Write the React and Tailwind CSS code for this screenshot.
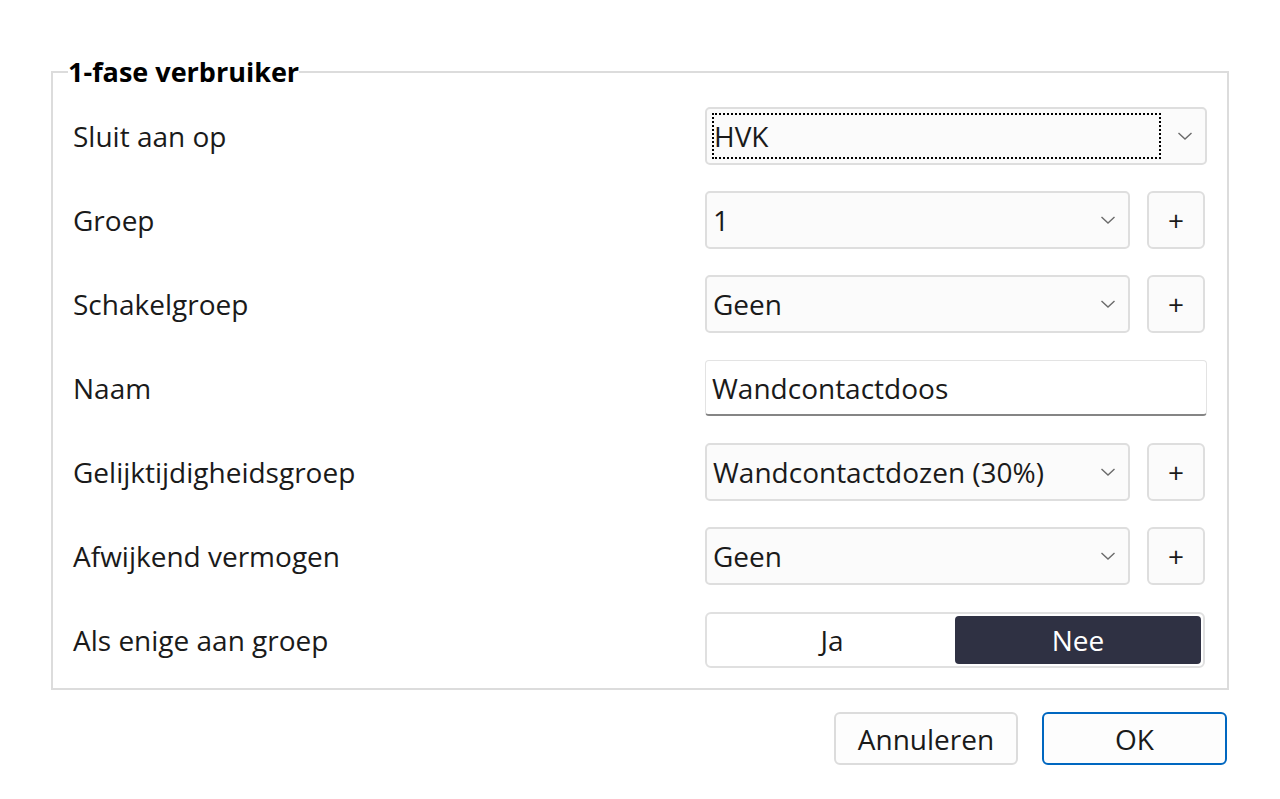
import React, { useState } from "react";

// Chevron used in the combo boxes
function Chevron() {
  return (
    <svg width="16" height="10" viewBox="0 0 16 10" className="shrink-0">
      <path d="M1.5 2 L8 8 L14.5 2" fill="none" stroke="#6b6b6b" strokeWidth="1.4" />
    </svg>
  );
}

function Combo({ value, focused, wide }) {
  return (
    <div
      className={`h-[58px] ${wide ? "w-[502px]" : "w-[425px]"} flex items-center rounded-[5px] border-2 border-[#dedede] bg-[#fbfbfb] pl-[5px] pr-[12px]`}
    >
      <div
        className={`flex-1 h-[46px] flex items-center ${focused ? "border-2 border-dotted border-black" : "pl-[1px]"}`}
      >
        <span className="text-[28px] leading-none text-[#1a1a1a]">{value}</span>
      </div>
      <div className={`${focused ? "ml-[16px]" : ""} flex items-center`}>
        <Chevron />
      </div>
    </div>
  );
}

function PlusButton() {
  return (
    <button className="h-[58px] w-[58px] ml-[17px] flex items-center justify-center rounded-[6px] border-2 border-[#dedede] bg-[#fbfbfb] text-[28px] text-[#1a1a1a]">
      +
    </button>
  );
}

const rows = [
  { label: "Sluit aan op", kind: "combo-wide", value: "HVK" },
  { label: "Groep", kind: "combo", value: "1" },
  { label: "Schakelgroep", kind: "combo", value: "Geen" },
  { label: "Naam", kind: "text", value: "Wandcontactdoos" },
  { label: "Gelijktijdigheidsgroep", kind: "combo", value: "Wandcontactdozen (30%)" },
  { label: "Afwijkend vermogen", kind: "combo", value: "Geen" },
  { label: "Als enige aan groep", kind: "toggle" },
];

export default function App() {
  const [alone, setAlone] = useState(false);

  return (
    <div
      className="w-[1280px] h-[799px] bg-white pt-[58px] pl-[51px]"
      style={{ fontFamily: '"Open Sans", "Noto Sans", sans-serif' }}
    >
      <fieldset className="w-[1178px] border-2 border-[#dcdcdc] pl-[20px] pr-[20px] pt-[21px] pb-[19px] m-0">
        <legend className="-ml-[5px] px-0 text-[27px] font-bold leading-[28px] text-black">
          1-fase verbruiker
        </legend>
        <div className="flex flex-col gap-[26px]">
          {rows.map((row) => (
            <div key={row.label} className="flex items-center h-[58px]">
              <div className="w-[632px] text-[28px] leading-none text-[#1a1a1a]">{row.label}</div>
              {row.kind === "combo-wide" && <Combo value={row.value} focused wide />}
              {row.kind === "combo" && (
                <>
                  <Combo value={row.value} />
                  <PlusButton />
                </>
              )}
              {row.kind === "text" && (
                <div className="h-[56px] w-[502px] flex items-center rounded-[4px] border border-[#e3e3e3] border-b-2 border-b-[#858585] bg-white pl-[6px]">
                  <span className="text-[28px] leading-none text-[#1a1a1a]">{row.value}</span>
                </div>
              )}
              {row.kind === "toggle" && (
                <div className="h-[56px] w-[500px] flex rounded-[6px] border-2 border-[#e0e0e0] bg-white p-[2px]">
                  <button
                    onClick={() => setAlone(true)}
                    className={`flex-1 rounded-[4px] text-[28px] leading-none ${alone ? "bg-[#2f3143] text-white" : "text-[#1a1a1a]"}`}
                  >
                    Ja
                  </button>
                  <button
                    onClick={() => setAlone(false)}
                    className={`flex-1 rounded-[4px] text-[28px] leading-none ${!alone ? "bg-[#2f3143] text-white" : "text-[#1a1a1a]"}`}
                  >
                    Nee
                  </button>
                </div>
              )}
            </div>
          ))}
        </div>
      </fieldset>
      <div className="w-[1176px] flex justify-end gap-[24px] mt-[22px]">
        <button className="h-[53px] w-[184px] rounded-[6px] border-2 border-[#dcdcdc] bg-[#fdfdfd] text-[28px] leading-none text-[#1a1a1a]">
          Annuleren
        </button>
        <button className="h-[53px] w-[185px] rounded-[6px] border-2 border-[#0067c0] bg-[#fdfdfd] text-[28px] leading-none text-[#1a1a1a]">
          OK
        </button>
      </div>
    </div>
  );
}
